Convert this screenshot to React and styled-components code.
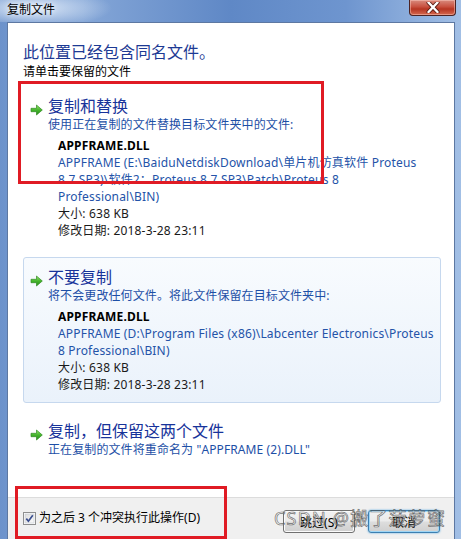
import React from 'react';
import styled, {createGlobalStyle} from 'styled-components';

const GlobalStyle = createGlobalStyle`
  html, body {
    margin: 0;
    padding: 0;
    overflow: hidden;
    background: #fff;
  }

  body {
    font-family: "Noto Sans", "Noto Sans CJK SC", sans-serif;
  }
`;

const Window = styled.div`
  position: relative;
  width: 461px;
  height: 539px;
  display: flex;
  flex-direction: column;
  overflow: hidden;
  background: linear-gradient(to right, #6c92cb 0%, #84a6d7 18%, #5f88c6 50%, #6e95cf 75%, #a2bfe5 100%);
`;

const TitleBar = styled.div`
  height: 22px;
  display: flex;
  justify-content: space-between;
  align-items: flex-start;
  padding: 0 5px 0 7px;
  background: radial-gradient(ellipse 80px 20px at 32px 8px, rgba(232, 241, 252, 0.95), rgba(232, 241, 252, 0));
`;

const Title = styled.div`
  font-family: "Noto Sans CJK SC", sans-serif;
  font-size: 12px;
  line-height: 17px;
  color: #000;
  text-shadow: 0 0 6px #fff;
`;

const CloseButton = styled.div`
  width: 45px;
  height: 15px;
  display: flex;
  align-items: center;
  justify-content: center;
  border: 1px solid #4c2323;
  border-top: none;
  border-radius: 0 0 4px 4px;
  background: linear-gradient(to bottom, #d98b7e 0%, #c8503f 45%, #b63522 60%, #d5694f 100%);
  box-shadow: inset 0 0 0 1px rgba(255, 210, 200, 0.45);
`;

const Client = styled.div`
  flex: 1;
  min-height: 0;
  margin: 0 6px 0 7px;
  display: flex;
  flex-direction: column;
  background: #fff;
  border: 1px solid #5d78a2;
  border-bottom: none;
`;

const Content = styled.div`
  flex: 1;
  padding: 18px 13px 0 15px;
`;

const Heading = styled.div`
  font-size: 16px;
  line-height: 22px;
  color: #1d3a94;
`;

const Instruction = styled.div`
  font-size: 12px;
  line-height: 16px;
  color: #000;
  margin: 1px 0 6px;
`;

const OptionList = styled.div`
  display: flex;
  flex-direction: column;
  gap: 8px;
`;

const Option = styled.div`
  padding: 8px 7px 9px 6px;
  border: 1px solid ${p => (p.$hover ? '#c6d8ee' : 'transparent')};
  border-radius: 3px;
  background: ${p => (p.$hover ? 'linear-gradient(to bottom, #f8fbfe, #eaf2fb)' : 'transparent')};
`;

const OptionHead = styled.div`
  display: flex;
  align-items: center;
  gap: 5px;
`;

const OptionTitle = styled.div`
  font-size: 16px;
  line-height: 22px;
  color: #17339a;
`;

const OptionSub = styled.div`
  padding-left: 18px;
  font-size: 12px;
  line-height: 16px;
  letter-spacing: 0.1px;
  color: #1d4fa6;
`;

const Details = styled.div`
  margin-top: 4px;
  padding-left: 28px;
  font-size: 12px;
  line-height: 17px;
  letter-spacing: 0.18px;
`;

const FileName = styled.div`
  font-weight: bold;
  color: #000;
`;

const PathLine = styled.div`
  color: #2453a8;
  white-space: nowrap;
`;

const Meta = styled.div`
  color: #1a1a1a;
`;

const Footer = styled.div`
  height: 42px;
  box-sizing: border-box;
  display: flex;
  justify-content: space-between;
  align-items: flex-start;
  padding: 12px 14px 0 15px;
  border-top: 1px solid #dcdcdc;
  background: #f0f0f0;
`;

const CheckRow = styled.label`
  display: flex;
  align-items: center;
  gap: 3px;
  font-size: 12px;
  line-height: 16px;
  color: #000;
`;

const Buttons = styled.div`
  display: flex;
  gap: 13px;
`;

const Button = styled.div`
  width: 72px;
  height: 23px;
  box-sizing: border-box;
  display: flex;
  align-items: center;
  justify-content: center;
  font-size: 12px;
  color: #000;
  border: 1px solid ${p => (p.$focus ? '#3c7fb1' : '#707070')};
  border-radius: 3px;
  background: linear-gradient(to bottom, #f2f2f2 0%, #ebebeb 48%, #dddddd 52%, #cfcfcf 100%);
  box-shadow: ${p => (p.$focus ? 'inset 0 0 0 1px #9fd6f5, 0 0 2px #4aa3e0' : 'inset 0 0 0 1px #fbfbfb')};
`;

const Annotation = styled.div`
  position: absolute;
  box-sizing: border-box;
  border: 3px solid #e01b24;
  pointer-events: none;
`;

const Watermark = styled.div`
  position: absolute;
  left: 274px;
  top: 505px;
  font-family: "Noto Sans", "Noto Sans CJK SC", sans-serif;
  font-size: 18px;
  line-height: 26px;
  letter-spacing: 1.2px;
  color: rgba(255, 255, 255, 0.35);
  -webkit-text-stroke: 0.7px rgba(70, 70, 70, 0.75);
  pointer-events: none;
  white-space: nowrap;
`;

function GreenArrow() {
    return (
        <svg width="13" height="12" viewBox="0 0 13 12" style={{marginTop: 7}}>
            <defs>
                <linearGradient id="arrowFill" x1="0" y1="0" x2="0" y2="1">
                    <stop offset="0" stopColor="#9be86f"/>
                    <stop offset="0.5" stopColor="#45b52c"/>
                    <stop offset="1" stopColor="#2a8f1c"/>
                </linearGradient>
            </defs>
            <path d="M1 4.3 H6.5 V1 L12.3 6 L6.5 11 V7.7 H1 Z" fill="url(#arrowFill)" stroke="#2f8a22" strokeWidth="0.7"
                  strokeLinejoin="round"/>
        </svg>
    );
}

function CloseX() {
    return (
        <svg width="14" height="11" viewBox="0 0 14 11">
            <path d="M2.5 0.5 L11.5 10 M11.5 0.5 L2.5 10" stroke="#5a1c14" strokeWidth="4" strokeLinecap="round"/>
            <path d="M2.5 0.5 L11.5 10 M11.5 0.5 L2.5 10" stroke="#fff" strokeWidth="2.4" strokeLinecap="round"/>
        </svg>
    );
}

function CheckBox() {
    return (
        <svg width="13" height="13" viewBox="0 0 13 13">
            <defs>
                <linearGradient id="boxFill" x1="0" y1="0" x2="1" y2="1">
                    <stop offset="0" stopColor="#dcdcdc"/>
                    <stop offset="1" stopColor="#fbfbfb"/>
                </linearGradient>
            </defs>
            <rect x="0.5" y="0.5" width="12" height="12" fill="#fff" stroke="#8e8f8f"/>
            <rect x="2" y="2" width="9" height="9" fill="url(#boxFill)" stroke="#c4c8cf" strokeWidth="0.6"/>
            <path d="M3.3 6.6 L5.4 9.2 L9.8 3.2" fill="none" stroke="#3b4f8f" strokeWidth="1.7"/>
        </svg>
    );
}

const options = [
    {
        title: '复制和替换',
        sub: '使用正在复制的文件替换目标文件夹中的文件:',
        path: [
            'APPFRAME (E:\\BaiduNetdiskDownload\\单片机仿真软件 Proteus',
            '8.7 SP3)\\软件2：Proteus 8.7 SP3\\Patch\\Proteus 8',
            'Professional\\BIN)'
        ]
    },
    {
        title: '不要复制',
        sub: '将不会更改任何文件。将此文件保留在目标文件夹中:',
        path: [
            'APPFRAME (D:\\Program Files (x86)\\Labcenter Electronics\\Proteus',
            '8 Professional\\BIN)'
        ],
        hover: true
    },
    {
        title: '复制，但保留这两个文件',
        sub: '正在复制的文件将重命名为 "APPFRAME (2).DLL"'
    }
];

function ConflictOption({option}) {
    return (
        <Option $hover={option.hover}>
            <OptionHead>
                <GreenArrow/>
                <OptionTitle>{option.title}</OptionTitle>
            </OptionHead>
            <OptionSub>{option.sub}</OptionSub>
            {option.path && (
                <Details>
                    <FileName>APPFRAME.DLL</FileName>
                    {option.path.map(line => <PathLine key={line}>{line}</PathLine>)}
                    <Meta>大小: 638 KB</Meta>
                    <Meta>修改日期: 2018-3-28 23:11</Meta>
                </Details>
            )}
        </Option>
    );
}

export default function App() {
    return (
        <>
            <GlobalStyle/>
            <Window>
                <TitleBar>
                    <Title>复制文件</Title>
                    <CloseButton><CloseX/></CloseButton>
                </TitleBar>
                <Client>
                    <Content>
                        <Heading>此位置已经包含同名文件。</Heading>
                        <Instruction>请单击要保留的文件</Instruction>
                        <OptionList>
                            {options.map(o => <ConflictOption key={o.title} option={o}/>)}
                        </OptionList>
                    </Content>
                    <Footer>
                        <CheckRow>
                            <CheckBox/>
                            <span>为之后 3 个冲突执行此操作(D)</span>
                        </CheckRow>
                        <Buttons>
                            <Button>跳过(S)</Button>
                            <Button $focus>取消</Button>
                        </Buttons>
                    </Footer>
                </Client>
                <Annotation style={{left: 18, top: 81, width: 306, height: 103}}/>
                <Annotation style={{left: 15, top: 486, width: 212, height: 53}}/>
                <Watermark>CSDN @搬了菠萝蜜</Watermark>
            </Window>
        </>
    );
}
